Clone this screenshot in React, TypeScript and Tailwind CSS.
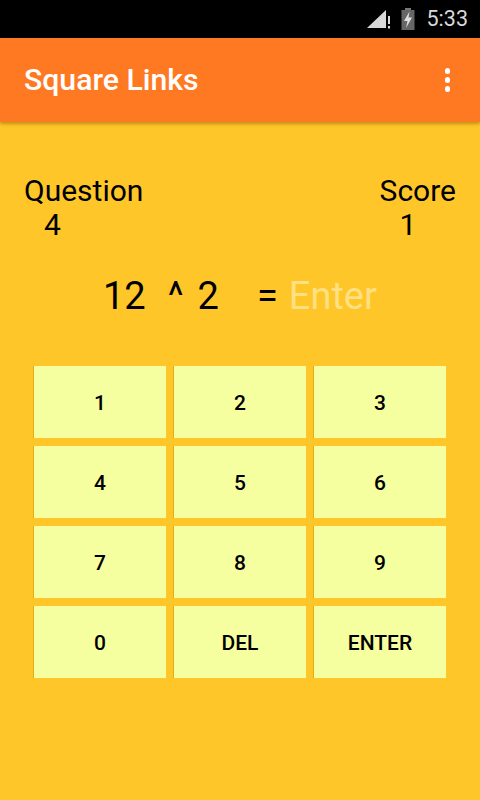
const keys = ['1', '2', '3', '4', '5', '6', '7', '8', '9', '0', 'DEL', 'ENTER'];

function StatusBar() {
  return (
    <div className="flex h-[38px] items-center justify-end bg-black pr-[12px]">
      <svg width="26" height="22" viewBox="0 0 26 22" className="mr-[9px]">
        <path d="M1 20 L20 2 V20 Z" fill="#d8d8d8" />
        <rect x="22" y="8" width="2" height="8" fill="#d8d8d8" />
        <rect x="22" y="18" width="2" height="2.5" fill="#d8d8d8" />
      </svg>
      <svg width="14" height="22" viewBox="0 0 14 22" className="mr-[12px]">
        <rect x="4" y="0" width="6" height="2" fill="#777" />
        <rect x="0.5" y="2" width="13" height="20" fill="#666" />
        <path d="M8.5 3.5 L3 13 H6.5 L5 20 L11 9.5 H7.5 Z" fill="#e0e0e0" />
      </svg>
      <span className="text-[21.5px] leading-none text-[#d8d8d8]">5:33</span>
    </div>
  );
}

function AppBar() {
  return (
    <div className="relative flex h-[84px] items-center justify-between bg-[#ff7922] pl-[24px] pr-[30px] shadow-[0_2px_3px_rgba(120,80,0,0.45)]">
      <span className="text-[30.2px] font-medium text-white">Square Links</span>
      <div className="flex flex-col gap-[3.5px]">
        <div className="h-[5.5px] w-[5.5px] rounded-full bg-white" />
        <div className="h-[5.5px] w-[5.5px] rounded-full bg-white" />
        <div className="h-[5.5px] w-[5.5px] rounded-full bg-white" />
      </div>
    </div>
  );
}

export default function App() {
  return (
    <div className="flex h-[800px] w-[480px] flex-col overflow-hidden bg-[#ffc629] font-['Roboto',sans-serif] text-black">
      <StatusBar />
      <AppBar />

      <div className="flex justify-between pl-[24px] pr-[24px] pt-[52px] text-[30px] leading-[34px]">
        <div className="flex flex-col">
          <span>Question</span>
          <span className="pl-[20px]">4</span>
        </div>
        <div className="flex flex-col">
          <span>Score</span>
          <span className="pl-[20px]">1</span>
        </div>
      </div>

      <div className="mt-[30px] flex h-[48px] items-center pl-[103px] text-[38px] leading-none">
        <span>12</span>
        <span className="ml-[22px]">^</span>
        <span className="ml-[14px]">2</span>
        <span className="ml-[38px]">=</span>
        <span className="ml-[11px] text-[#ffe082]">Enter</span>
      </div>

      <div className="mt-[46px] grid grid-cols-[132px_132px_132px] gap-x-[8px] gap-y-[8px] pl-[34px]">
        {keys.map((k) => (
          <div
            key={k}
            className="flex h-[72px] items-center justify-center bg-[#f6ffa0] pt-[3px] text-[21px] font-medium shadow-[-1px_0_0_rgba(200,140,0,0.45)]"
          >
            {k}
          </div>
        ))}
      </div>
    </div>
  );
}
